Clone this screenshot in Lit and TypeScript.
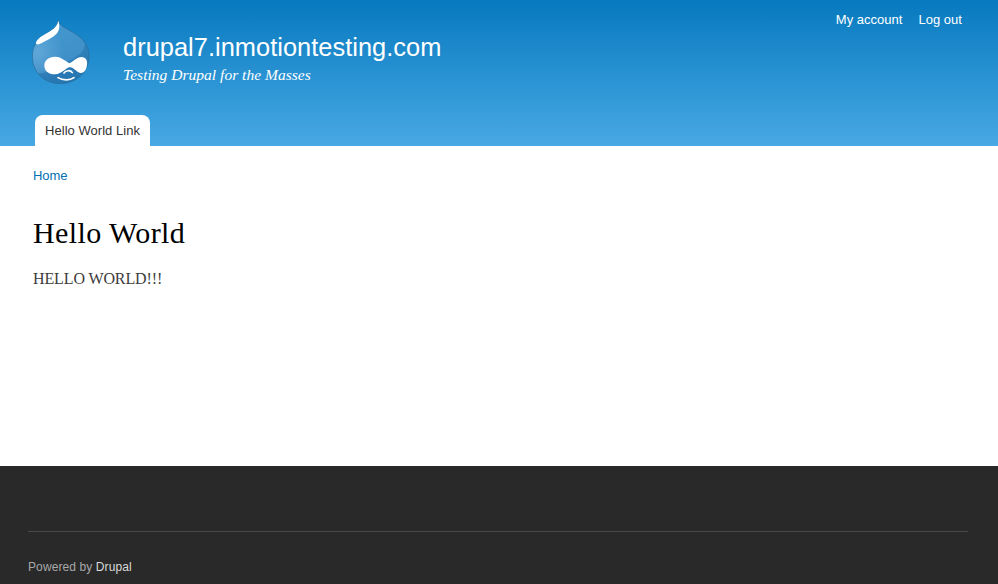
import { LitElement, html, css } from "lit";
import { customElement } from "lit/decorators.js";

@customElement("site-logo")
class SiteLogo extends LitElement {
  static styles = css`
    :host { display: block; width: 58px; height: 64px; }
    svg { display: block; }
  `;
  render() {
    return html`<svg width="58" height="64" viewBox="37 30 174 192" aria-label="Home">
      <defs>
        <linearGradient id="body" x1="0.3" y1="0.1" x2="0.6" y2="1">
          <stop offset="0" stop-color="#4398cf" />
          <stop offset="0.6" stop-color="#408fc9" />
          <stop offset="1" stop-color="#2e7db8" />
        </linearGradient>
        <radialGradient id="glow" cx="0.1" cy="0.5" r="0.45">
          <stop offset="0" stop-color="#7dbbe4" stop-opacity="0.5" />
          <stop offset="1" stop-color="#7dbbe4" stop-opacity="0" />
        </radialGradient>
        <clipPath id="drop">
          <path d="M116 31C119 46 133 53 151 62C187 80 208 104 208 138C208 188 168 221 122 221C75 221 38 188 38 139C38 108 54 87 76 73C97 60 113 53 116 31Z" />
        </clipPath>
      </defs>
      <g clip-path="url(#drop)">
        <path fill="url(#body)" d="M36 30H211V224H36Z" />
        <path fill="url(#glow)" d="M36 30H211V224H36Z" />
        <path fill="#1768a5" opacity=".42" d="M194 91C201 118 182 133 158 148C122 168 92 190 54 190C66 217 105 228 137 222C190 211 220 168 206 120Z" />
      </g>
      <path fill="none" stroke="#2a6890" stroke-opacity=".7" stroke-width="2.5" d="M116 31C119 46 133 53 151 62C187 80 208 104 208 138C208 188 168 221 122 221C75 221 38 188 38 139C38 108 54 87 76 73C97 60 113 53 116 31Z" />
      <path fill="#fff" d="M116 32C121 47 120 61 110 72C100 82 88 88 77 93C65 99 58 106 50 102C45 97 57 83 77 72C96 61 112 53 116 32Z" />
      <path fill="#fff" d="M105 140C121 139 134 150 149 160C157 157 173 140 187 141C201 143 205 155 201 170C198 184 189 191 180 188C170 185 162 173 151 171C139 172 127 192 106 193C87 193 74 182 74 167C74 150 88 141 105 140Z" />
      <g fill="none" stroke="#fff" stroke-linecap="round">
        <path stroke-width="5" d="M133 189C138 180 153 180 158 188" />
        <path stroke-width="5" d="M115 203C129 212 151 212 163 203" />
      </g>
    </svg>`;
  }
}

@customElement("app-root")
class AppRoot extends LitElement {
  static styles = css`
    :host {
      display: flex; flex-direction: column; height: 584px; overflow: hidden;
      background: #fff; font: 13px/20px "Liberation Sans", Arial, sans-serif;
    }
    a { color: inherit; text-decoration: none; }
    header {
      height: 146px; box-sizing: border-box; padding: 0 36px 0 32px;
      display: grid; grid-template-columns: 91px 1fr auto; grid-template-rows: 115px 31px;
      background: linear-gradient(#0779bf, #48a9e4); color: #fff;
    }
    site-logo { margin-top: 20px; }
    .name { margin-top: 32px; font-size: 25.4px; line-height: 30px; letter-spacing: .03px; }
    .slogan { margin-top: 3px; font: italic 15.5px/20px "Liberation Serif", serif; letter-spacing: .02px; }
    .account { display: flex; gap: 16px; padding-top: 10px; letter-spacing: .02px; }
    .tabs { grid-column: 1 / 4; display: flex; padding-left: 3px; }
    .tab {
      box-sizing: border-box; width: 115px; height: 31px; padding-left: 10px;
      background: #fff; border-radius: 8px 8px 0 0; color: #333; line-height: 31px;
      letter-spacing: .04px;
    }
    main { flex: 1; padding: 20px 33px 0; }
    .crumb { color: #0071b3; letter-spacing: -.1px; }
    h1 { margin: 29px 0 0; font: 30px/36px "Liberation Serif", serif; letter-spacing: .4px; color: #000; }
    p { margin: 16px 0 0; font: 16px/24px "Liberation Serif", serif; letter-spacing: -.12px; color: #3b3b3b; }
    footer { height: 118px; box-sizing: border-box; padding: 65px 30px 0 28px; background: #292929; color: #a8a8a8; }
    .powered { border-top: 1px solid #484848; padding-top: 25px; font-size: 12px; letter-spacing: .1px; }
    .powered a { color: #dadada; }
  `;
  render() {
    return html`
      <header>
        <site-logo></site-logo>
        <div>
          <div class="name"><a href="#">drupal7.inmotiontesting.com</a></div>
          <div class="slogan">Testing Drupal for the Masses</div>
        </div>
        <nav class="account"><a href="#">My account</a><a href="#">Log out</a></nav>
        <nav class="tabs"><a class="tab" href="#">Hello World Link</a></nav>
      </header>
      <main>
        <nav class="crumb"><a href="#">Home</a></nav>
        <h1>Hello World</h1>
        <p>HELLO WORLD!!!</p>
      </main>
      <footer><div class="powered">Powered by <a href="#">Drupal</a></div></footer>
    `;
  }
}
